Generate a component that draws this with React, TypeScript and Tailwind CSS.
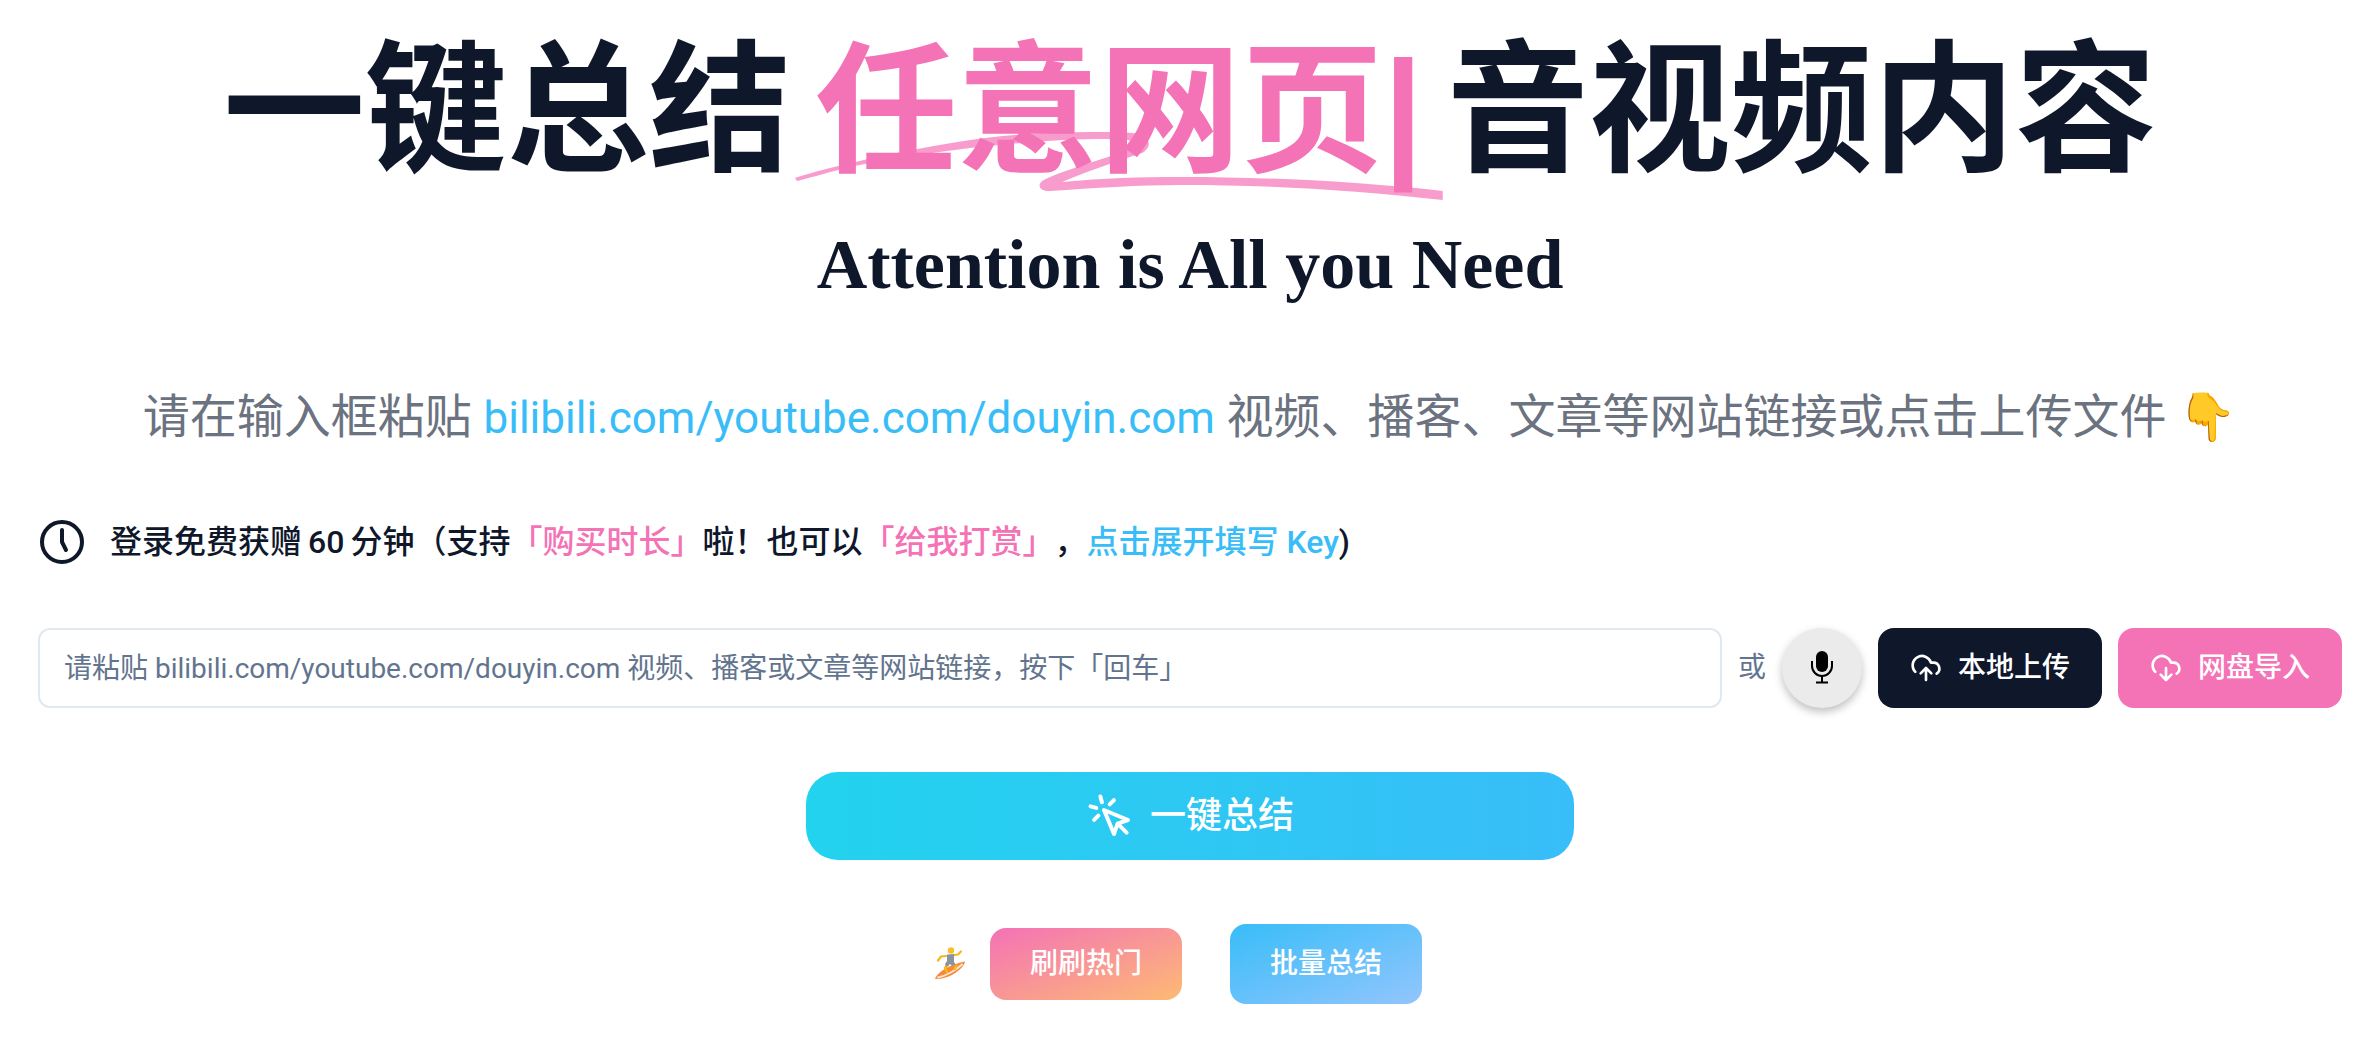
import React, { useState } from 'react';
import { Clock5 } from 'lucide-react';

const Underline: React.FC = () => (
  <svg
    aria-hidden="true"
    viewBox="0 0 650 68"
    preserveAspectRatio="none"
    className="absolute left-0 top-[93px] h-[68px] w-full overflow-visible fill-[#f472b6]/70"
  >
    <path d="M0 45C30 35 100 19 163 9C205 2 255 -1 297 -1C325 -1 340 -1 348 2C356 5 357 13 352 17C350 20 346 21 342 22C318 30 294 38 268 49C310 45 345 44 387 44C470 44 560 48 650 58L650 67C560 57 480 52 387 52C345 52 300 55 256 58C247 59 242 53 248 48C262 40 290 32 317 23C324 20 332 16 336 13C339 11 339 8 334 7C310 5 280 6 253 8C180 13 100 24 56 34C34 39 18 44 2 48Z" />
  </svg>
);

const CloudIcon: React.FC<{ down?: boolean }> = ({ down = false }) => (
  <svg
    aria-hidden="true"
    viewBox="0 0 24 24"
    className="h-8 w-8"
    fill="none"
    stroke="currentColor"
    strokeWidth={2}
    strokeLinecap="round"
    strokeLinejoin="round"
  >
    <path d="M4 14.899A7 7 0 1 1 15.71 8h1.79a4.5 4.5 0 0 1 2.5 8.242" />
    <path d={down ? 'M12 12v9M8 17l4 4 4-4' : 'M12 12v9M16 16l-4-4-4 4'} />
  </svg>
);

const MicIcon: React.FC = () => (
  <svg aria-hidden="true" viewBox="0 0 24 34" className="h-[34px] w-6" fill="none" stroke="black" strokeWidth={2}>
    <rect x="6" y="0" width="12" height="21" rx="6" fill="black" stroke="none" />
    <path d="M2 10v5a10 10 0 0 0 20 0v-5M12 25v6M6 31.500h12" />
  </svg>
);

const ClickIcon: React.FC = () => (
  <svg
    aria-hidden="true"
    viewBox="0 0 24 24"
    className="h-12 w-12"
    fill="none"
    stroke="currentColor"
    strokeWidth={2}
    strokeLinecap="round"
    strokeLinejoin="round"
  >
    <path d="m9 9 5 12 1.774-5.226L21 14 9 9z" />
    <path d="m16.071 16.071 4.243 4.243M7.188 2.239l.777 2.897M5.136 7.965l-2.898-.777M13.950 4.050l-2.122 2.122M6.172 11.828l-2.122 2.122" />
  </svg>
);

const SurferIcon: React.FC = () => (
  <svg role="img" aria-label="冲浪" viewBox="0 0 32 34" className="h-[34px] w-8" fill="none" strokeLinecap="round" strokeLinejoin="round">
    <path d="M1 32C3 25 17 17 31 14.500C30 22 14 33 1 32Z" fill="#f58a3c" />
    <path d="M4 30.500C12 29 22 23 28 17.500" stroke="#fde3c8" strokeWidth="2" />
    <path d="M12 9L7 9.500L4 13.500M20 8L24 7.500L27 4.500" stroke="#f7b718" strokeWidth="2.200" />
    <path d="M14 18L11 21L13 25M18 17L22 18.500L21 22" stroke="#f7b718" strokeWidth="2.600" />
    <path d="M13 7.500L20 7L20 15L22 18L18 19L16 17L12 20L11 17L13 14Z" fill="#8b93a3" />
    <circle cx="17" cy="3.500" r="3.200" fill="#fbbf24" />
  </svg>
);

const App: React.FC = () => {
  const [url, setUrl] = useState('');

  return (
    <main className="flex flex-col items-center px-[38px] pt-10 pb-9 font-[Roboto,'Noto_Sans_CJK_SC',sans-serif] text-slate-900 [text-spacing-trim:space-all]">
      <h1 className="flex justify-center whitespace-nowrap text-[142px] leading-[144px] font-bold">
        <span>一键总结</span>
        <span className="relative mx-1 px-5 text-[#f472b6]">
          <Underline />
          <span className="relative">
            任意网页<span className="font-['Liberation_Sans',sans-serif]">|</span>
          </span>
        </span>
        <span>音视频内容</span>
      </h1>

      <p className="mt-11 font-['Liberation_Serif',serif] text-[70px] leading-[72px] font-bold">
        Attention is All you Need
      </p>

      <p className="mt-20 whitespace-nowrap text-[47px] leading-[72px] text-[#6b7280]">
        请在输入框粘贴 <span className="text-[44px] text-[#38bdf8]">bilibili.com/youtube.com/douyin.com</span>{' '}
        视频、播客、文章等网站链接或点击上传文件 👇
      </p>

      <div className="mt-16 flex w-full items-center gap-6 text-[32px] leading-12 font-medium">
        <Clock5 className="h-12 w-12" />
        <p>
          登录免费获赠<span className="mx-1.5">60</span>分钟（支持
          <a href="#buy" className="text-[#f472b6]">「购买时长」</a>啦！也可以
          <a href="#reward" className="text-[#f472b6]">「给我打赏」</a>，
          <a href="#key" className="text-[#38bdf8]">点击展开填写 Key</a>)
        </p>
      </div>

      <form className="mt-[62px] flex w-full flex-col items-center" onSubmit={(e) => e.preventDefault()}>
        <div className="flex w-full items-center gap-4 text-[28px]">
          <input
            type="text"
            aria-label="链接"
            value={url}
            onChange={(e) => setUrl(e.target.value)}
            placeholder="请粘贴 bilibili.com/youtube.com/douyin.com 视频、播客或文章等网站链接，按下「回车」"
            className="h-20 min-w-0 flex-1 rounded-xl border-2 border-slate-200 px-6 placeholder:text-slate-500"
          />
          <span className="text-slate-500">或</span>
          <button
            type="button"
            aria-label="语音输入"
            className="flex h-20 w-20 items-center justify-center rounded-full bg-[#ebebeb] shadow-[0_4px_8px_rgba(0,0,0,0.25)]"
          >
            <MicIcon />
          </button>
          <button type="button" className="flex h-20 items-center gap-4 rounded-2xl bg-slate-900 px-8 font-medium text-white">
            <CloudIcon />
            本地上传
          </button>
          <button type="button" className="flex h-20 items-center gap-4 rounded-2xl bg-[#f472b6] px-8 font-medium text-white">
            <CloudIcon down />
            网盘导入
          </button>
        </div>

        <button
          type="submit"
          className="mt-16 flex h-22 w-1/3 items-center justify-center gap-4 rounded-[32px] bg-linear-to-r/srgb from-[#22d3ee] to-[#38bdf8] text-[36px] font-medium text-white"
        >
          <ClickIcon />
          一键总结
        </button>
      </form>

      <div className="mt-16 flex items-center pr-6 text-[28px] font-medium">
        <span className="mr-6">
          <SurferIcon />
        </span>
        <button
          type="button"
          className="mr-12 h-[72px] rounded-2xl bg-linear-to-br/srgb from-[#f472b6] to-[#fdba74] px-10 text-white"
        >
          刷刷热门
        </button>
        <button type="button" className="h-20 rounded-2xl bg-linear-to-br/srgb from-[#38bdf8] to-[#93c5fd] px-10 text-white">
          批量总结
        </button>
      </div>
    </main>
  );
};

export default App;
